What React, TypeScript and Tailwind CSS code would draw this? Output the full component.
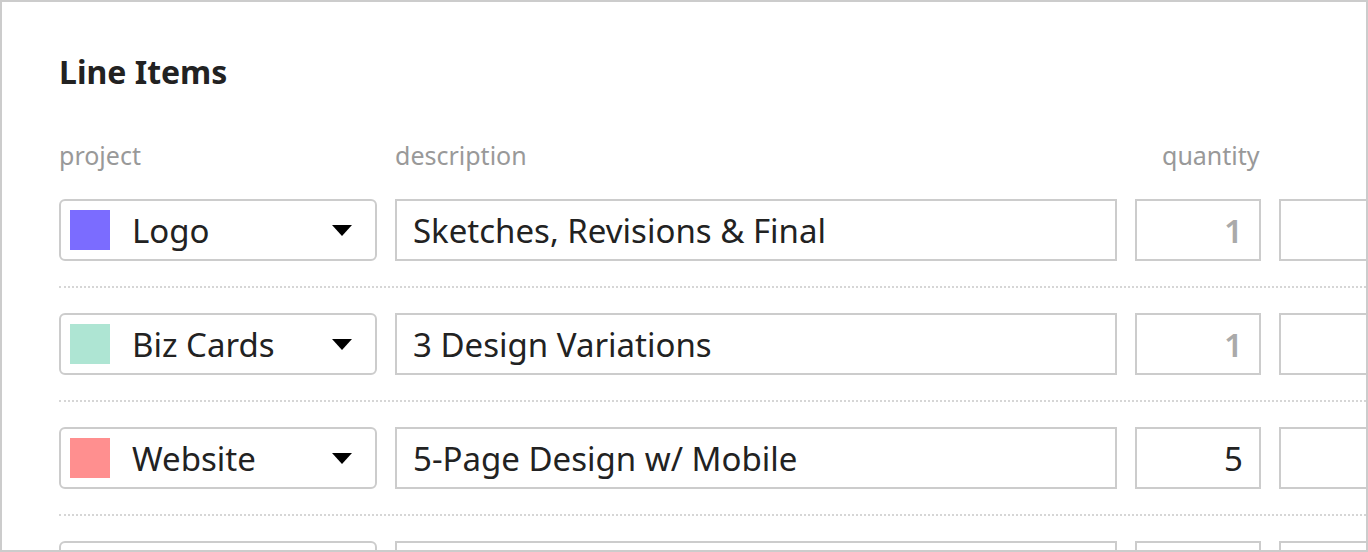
import React from "react";

type Row = { color: string; project: string; desc: string; qty: string; qtyMuted: boolean };

const rows: Row[] = [
  { color: "bg-[#7b6cff]", project: "Logo", desc: "Sketches, Revisions & Final", qty: "1", qtyMuted: true },
  { color: "bg-[#aee5d3]", project: "Biz Cards", desc: "3 Design Variations", qty: "1", qtyMuted: true },
  { color: "bg-[#ff8f8f]", project: "Website", desc: "5-Page Design w/ Mobile", qty: "5", qtyMuted: false },
];

function LineRow({ r }: { r: Row }) {
  return (
    <div className="flex gap-[18px] h-[62px] shrink-0">
      <div className="w-[318px] shrink-0 h-full border-2 border-[#cccccc] rounded-[6px] flex items-center pl-[9px] pr-[23px]">
        <div className={`w-[40px] h-[40px] ${r.color} shrink-0`} />
        <span className="ml-[22px] text-[33px] text-[#222] leading-none flex-1 whitespace-nowrap">{r.project}</span>
        <svg width="20" height="11" viewBox="0 0 20 11" className="shrink-0">
          <path d="M0 0 L20 0 L10 11 Z" fill="#000" />
        </svg>
      </div>
      <div className="w-[722px] shrink-0 h-full border-2 border-[#cccccc] flex items-center pl-[16px]">
        <span className="text-[33px] text-[#222] leading-none whitespace-nowrap">{r.desc}</span>
      </div>
      <div className="w-[126px] shrink-0 h-full border-2 border-[#cccccc] flex items-center justify-end pr-[16px]">
        <span className={`text-[33px] leading-none ${r.qtyMuted ? "text-[#aaaaaa] font-semibold" : "text-[#222]"}`}>{r.qty}</span>
      </div>
      <div className="w-[200px] shrink-0 h-full border-2 border-[#cccccc]" />
    </div>
  );
}

function Separator() {
  return <div className="my-[25px] border-t-2 border-dotted border-[#d6d6d6]" />;
}

export default function App() {
  return (
    <div
      className="w-[1368px] h-[552px] border-2 border-[#cccccc] bg-white overflow-hidden pl-[57px] pt-[50px]"
      style={{ fontFamily: '"Noto Sans", "Open Sans", sans-serif' }}
    >
      <h2 className="text-[32px] font-bold text-[#222] leading-[40px] whitespace-nowrap">Line Items</h2>
      <div className="flex mt-[48px] text-[25px] text-[#999999] leading-[30px] h-[30px]">
        <div className="w-[336px] shrink-0">project</div>
        <div className="w-[767px] shrink-0">description</div>
        <div className="w-[126px] shrink-0">quantity</div>
      </div>
      <div className="mt-[29px] flex flex-col">
        {rows.map((r, i) => (
          <React.Fragment key={i}>
            <LineRow r={r} />
            <Separator />
          </React.Fragment>
        ))}
        <div className="flex gap-[18px] h-[62px] shrink-0">
          <div className="w-[318px] shrink-0 h-full border-2 border-[#cccccc] rounded-[6px]" />
          <div className="w-[722px] shrink-0 h-full border-2 border-[#cccccc]" />
          <div className="w-[126px] shrink-0 h-full border-2 border-[#cccccc]" />
          <div className="w-[200px] shrink-0 h-full border-2 border-[#cccccc]" />
        </div>
      </div>
    </div>
  );
}
